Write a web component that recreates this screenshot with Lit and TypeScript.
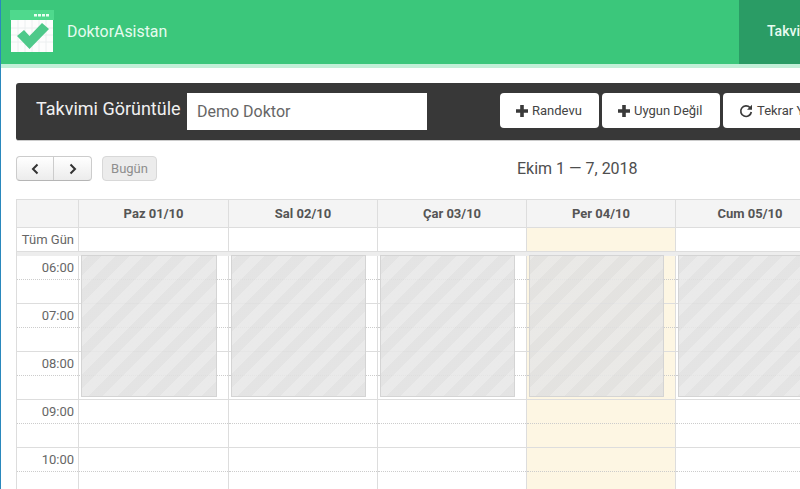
import { LitElement, html, css, svg } from "lit";
import { customElement } from "lit/decorators.js";

const days = ["Paz 01/10", "Sal 02/10", "Çar 03/10", "Per 04/10", "Cum 05/10"];
const hours = ["06:00", "07:00", "08:00", "09:00", "10:00"];
const plus = svg`<svg class="ic" width="12" height="12" viewBox="0 0 12 12"><path d="M4.200 0h3.600v4.200H12v3.600H7.800V12H4.200V7.800H0V4.200h4.200z" fill="#3a3a3a"/></svg>`;
const redo = svg`<svg class="ic" width="14" height="14" viewBox="0 0 14 14"><path d="M11 3.600A5.300 5.300 0 1 0 12.300 8" fill="none" stroke="#3a3a3a" stroke-width="1.700"/><path d="M13 .8v5H8z" fill="#3a3a3a"/></svg>`;

@customElement("app-root")
export class AppRoot extends LitElement {
  static styles = css`
    :host { display: block; width: 800px; height: 489px; overflow: hidden; background: #fff; font-family: Roboto, "Liberation Sans", sans-serif; color: #555; border-left: 1px solid #2a88bd; box-sizing: border-box; }
    .page { width: 1100px; }
    header { height: 68px; box-sizing: border-box; background: #3bc77b; border-bottom: 4px solid #c2f0d8; display: flex; align-items: stretch; }
    .logo { margin: 10px 0 0 9px; width: 44px; height: 43px; flex: none; }
    .brand { margin-left: 13px; color: #e6fbef; font-size: 15.900px; line-height: 63px; width: 672px; flex: none; }
    .nav { background: #2a9c65; color: #e8fbf1; font-size: 14px; font-weight: 500; padding-left: 28px; line-height: 63px; width: 200px; }
    .main { padding: 15px 0 0 15px; }
    .bar { height: 58px; background: #383838; border-radius: 3px 0 0 3px; border-bottom: 1px solid #ccc; box-sizing: border-box; display: flex; align-items: flex-start; padding: 10px 0 0 20px; }
    .bar-title { color: #f0f0f0; font-size: 18px; line-height: 37px; width: 151px; flex: none; white-space: nowrap; margin-top: -3px; }
    .input { width: 240px; height: 37px; background: #fff; color: #666; font-size: 16px; line-height: 37px; padding-left: 10px; box-sizing: border-box; flex: none; margin-right: 73px; }
    .btn { height: 35px; background: #fff; border-radius: 4px; color: #444; font-size: 13px; display: flex; align-items: center; gap: 4px; padding-left: 16px; box-sizing: border-box; margin-right: 3px; flex: none; white-space: nowrap; }
    .b1 { width: 99px; }
    .b2 { width: 118px; }
    .b3 { width: 140px; }
    .toolbar { display: flex; height: 58px; align-items: flex-start; padding-top: 15px; box-sizing: border-box; }
    .nav-group { display: flex; width: 76px; height: 25px; border: 1px solid #ccc; border-bottom-color: #b5b5b5; border-radius: 4px; background: linear-gradient(#fff, #ececec); box-sizing: border-box; flex: none; }
    .nav-group span { flex: 1; display: flex; align-items: center; justify-content: center; }
    .nav-group span:first-child { flex: none; width: 37px; box-sizing: border-box; border-right: 1px solid #ccc; }
    .today { margin-left: 10px; width: 55px; height: 25px; box-sizing: border-box; border: 1px solid #d8d8d8; border-radius: 4px; background: #ececec; color: #8e8e8e; font-size: 13px; line-height: 23px; text-align: center; flex: none; }
    .range { margin-left: 360px; font-size: 16px; color: #4e4e4e; line-height: 26px; white-space: nowrap; flex: none; }
    .grid { display: grid; grid-template-columns: 62px 150px repeat(4, 149px); width: 808px; border-top: 1px solid #ddd; border-left: 1px solid #ddd; box-sizing: border-box; }
    .h { height: 28px; background: #f4f4f4; border-right: 1px solid #ddd; border-bottom: 1px solid #ddd; box-sizing: border-box; font-size: 13px; font-weight: 700; color: #555; text-align: center; line-height: 27px; }
    .allday { height: 23px; border-right: 1px solid #ddd; box-sizing: border-box; background: #fff; }
    .axis { font-size: 13px; color: #666; text-align: right; padding-right: 4px; line-height: 23px; white-space: nowrap; }
    .today-c { background: #fdf6e3; }
    .divider { grid-column: 1 / -1; height: 5px; background: #ededed; border-top: 1px solid #ddd; box-sizing: border-box; }
    .col { position: relative; border-right: 1px solid #ddd; box-sizing: border-box; }
    .slot { height: 48px; box-sizing: border-box; border-bottom: 1px solid #ddd; }
    .slot i { display: block; height: 24px; box-sizing: border-box; border-bottom: 1px dotted #ccc; }
    .time { font-size: 13px; color: #666; text-align: right; padding-right: 4px; line-height: 24px; height: 24px; box-sizing: border-box; border-bottom: 1px dotted #ccc; }
    .block { position: absolute; left: 2px; right: 11px; top: -1px; height: 142px; box-sizing: border-box; border: 1px solid #d4d4d4; background: repeating-linear-gradient(-45deg, rgba(224,224,224,.88) 0 10px, rgba(231,231,231,.88) 10px 20px); }
  `;

  render() {
    return html`<div class="page">
      <header>
        <svg class="logo" viewBox="0 0 44 43">
          <rect width="44" height="10" fill="#4fd98d"/>
          <rect x="1" y="10" width="42" height="32" fill="#fdfdfd"/>
          <path d="M1 18h42M1 25h42M1 32h42M8 10v32M15 10v32M22 10v32M29 10v32M36 10v32" stroke="#eceff0" stroke-width="1"/>
          <path d="M24 4h3v2.500h-3zM28 4h3v2.500h-3zM32 4h3v2.500h-3zM36 4h3v2.500h-3z" fill="#eafff3"/>
          <path d="M7 26l7-6 5.500 6L32 13l7 6-19.500 20z" fill="#4ec98a"/>
        </svg>
        <div class="brand">DoktorAsistan</div>
        <div class="nav">Takvim</div>
      </header>
      <div class="main">
        <div class="bar">
          <div class="bar-title">Takvimi Görüntüle</div>
          <div class="input">Demo Doktor</div>
          <div class="btn b1">${plus}Randevu</div>
          <div class="btn b2">${plus}Uygun Değil</div>
          <div class="btn b3">${redo}Tekrar Yükle</div>
        </div>
        <div class="toolbar">
          <div class="nav-group">
            <span><svg width="10" height="12" viewBox="0 0 10 12"><path d="M7.500 1.500L3 6l4.500 4.500" fill="none" stroke="#333" stroke-width="2"/></svg></span>
            <span><svg width="10" height="12" viewBox="0 0 10 12"><path d="M2.500 1.500L7 6l-4.500 4.500" fill="none" stroke="#333" stroke-width="2"/></svg></span>
          </div>
          <div class="today">Bugün</div>
          <div class="range">Ekim 1 — 7, 2018</div>
        </div>
        <div class="grid">
          <div class="h"></div>
          ${days.map((d) => html`<div class="h">${d}</div>`)}
          <div class="allday axis">Tüm Gün</div>
          ${days.map((_, i) => html`<div class="allday ${i === 3 ? "today-c" : ""}"></div>`)}
          <div class="divider"></div>
          <div class="col">
            ${hours.map((h) => html`<div class="slot"><div class="time">${h}</div></div>`)}
          </div>
          ${days.map((_, i) => html`<div class="col ${i === 3 ? "today-c" : ""}">
            ${hours.map(() => html`<div class="slot"><i></i></div>`)}
            <div class="block"></div>
          </div>`)}
        </div>
      </div>
    </div>`;
  }
}
